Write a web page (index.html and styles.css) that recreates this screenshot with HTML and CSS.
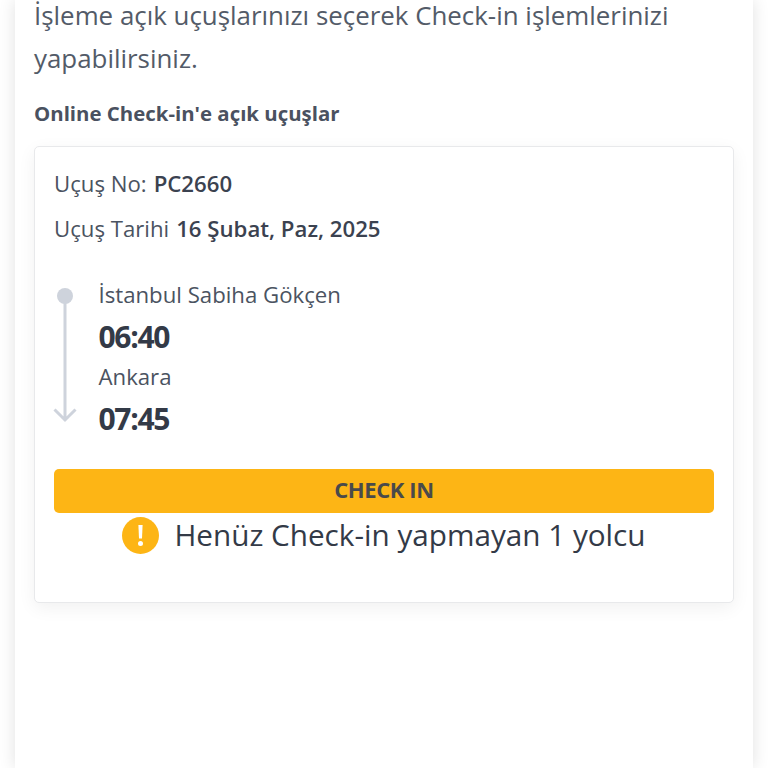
FILE: index.html
```html
<!DOCTYPE html>
<html lang="tr">
<head>
<meta name="viewport" content="width=device-width, initial-scale=1">
<link rel="stylesheet" href="styles.css">
</head>
<body>

<div class="panel">
  <p class="intro">İşleme açık uçuşlarınızı seçerek Check-in işlemlerinizi yapabilirsiniz.</p>
  <h2 class="title">Online Check-in'e açık uçuşlar</h2>

  <div class="card">
    <div class="info"><span>Uçuş No:</span> <b>PC2660</b></div>
    <div class="info"><span>Uçuş Tarihi</span> <b>16 Şubat, Paz, 2025</b></div>

    <div class="route">
      <svg class="route-line" width="24" height="140" viewBox="0 0 24 140">
        <circle cx="12" cy="8" r="8" fill="#ced3dc"/>
        <path d="M12 10V132M1.500 121.500L12 132L22.500 121.500" fill="none" stroke="#ced3dc" stroke-width="3"/>
      </svg>
      <div class="stops">
        <div class="city">İstanbul Sabiha Gökçen</div>
        <div class="time">06:40</div>
        <div class="city">Ankara</div>
        <div class="time">07:45</div>
      </div>
    </div>

    <button type="button" class="checkin">CHECK IN</button>

    <div class="notice">
      <svg width="37" height="37" viewBox="0 0 37 37">
        <circle cx="18.5" cy="18.5" r="18.5" fill="#fdb515"/>
        <path d="M16.400 8h4.200l-.6 13.500h-3z" fill="#fff"/>
        <circle cx="18.5" cy="26.5" r="2.500" fill="#fff"/>
      </svg>
      <span>Henüz Check-in yapmayan 1 yolcu</span>
    </div>
  </div>
</div>

</body>
</html>
```

FILE: styles.css
```css
html, body {
  height: 100%;
}

body {
  margin: 0;
  overflow: hidden;
  background-color: #fff;
  font-family: "Open Sans", "Noto Sans", sans-serif;
  color: #333a47;
}

.panel {
  display: flow-root;
  box-sizing: border-box;
  width: 738px;
  height: 768px;
  margin-left: 15px;
  padding: 0 19px;
  background-color: #fff;
  box-shadow: 0 0 16px rgba(0, 0, 0, 0.12);
}

.intro {
  margin: -6px 0 0 0;
  font-size: 25.9px;
  line-height: 43px;
  color: #535b68;
}

.title {
  margin: 19px 0 0 0;
  font-size: 20.4px;
  line-height: 28px;
  font-weight: 700;
  color: #4a5160;
}

.card {
  box-sizing: border-box;
  height: 457px;
  margin-top: 19px;
  padding: 14px 19px;
  background-color: #fff;
  border: 1px solid #e8e9eb;
  border-radius: 5px;
  box-shadow: 0 5px 18px rgba(0, 0, 0, 0.06);
}

.info {
  display: flex;
  gap: 7px;
  font-size: 22.2px;
  line-height: 45px;
  height: 45px;
  color: #4b5361;
}

.info b {
  font-weight: 600;
  color: #3b4250;
}

.route {
  display: flex;
  gap: 21.5px;
  margin-top: 25px;
}

.route-line {
  margin-left: -1px;
  margin-top: 12px;
}

.city {
  font-size: 22.2px;
  line-height: 38px;
  color: #4b5361;
}

.time {
  padding-top: 2px;
  margin-bottom: 1px;
  font-size: 30px;
  line-height: 41px;
  font-weight: 700;
  letter-spacing: -1.3px;
  color: #333a47;
}

.checkin {
  display: block;
  width: 100%;
  height: 44px;
  margin-top: 29px;
  padding: 0 0 5px 0;
  border: none;
  border-radius: 5px;
  background-color: #fdb515;
  font-family: inherit;
  font-size: 22px;
  font-weight: 700;
  letter-spacing: -0.4px;
  color: #4a4a4a;
  cursor: pointer;
}

.notice {
  display: flex;
  justify-content: center;
  align-items: center;
  gap: 15px;
  margin-top: 2px;
  font-size: 29.7px;
  line-height: 40px;
  color: #333a47;
}
```
